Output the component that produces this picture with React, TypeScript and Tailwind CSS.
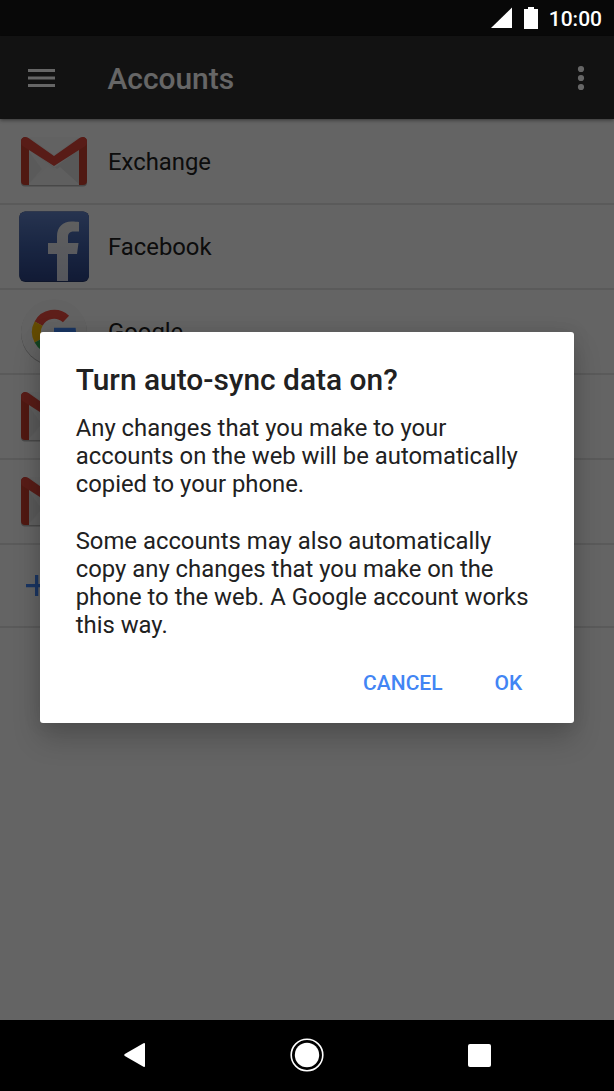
import type { ReactNode } from 'react';

function GmailIcon() {
  return (
    <svg className="h-[51px] w-[68px]" viewBox="0 0 68 51">
      <rect x="1" y="3" width="66" height="47.500" rx="4" fill="#000" opacity="0.28" />
      <path d="M8 2h52v47H8z" fill="#ececec" />
      <path d="M8 14l14 19L8 49z" fill="#e2e2e2" />
      <path d="M8 13l26 19 26-19v36z" fill="#dcdcdc" />
      <path d="M8 49l20-18 6 4 6-4 20 18z" fill="#eeeeee" />
      <path d="M9 1h50L34 19z" fill="#f4f4f4" />
      <path d="M1 5.500A4.500 4.500 0 0 1 5 1L9 4V49H5A4 4 0 0 1 1 45z" fill="#c9402f" />
      <path d="M67 5.500A4.500 4.500 0 0 0 63 1L59 4V49h4a4 4 0 0 0 4-4z" fill="#c9402f" />
      <path d="M1 5.500C1 1.500 5.500 0 8.500 2L34 20 59.500 2C62.500 0 67 1.500 67 5.500 67 8 66 9.500 64.500 10.500L34 30 3.500 10.500C2 9.500 1 8 1 5.500z" fill="#dc463b" />
    </svg>
  );
}

function FacebookIcon() {
  return (
    <svg className="h-[71px] w-[70px]" viewBox="0 0 70 71">
      <defs>
        <linearGradient id="fb" x1="0" y1="0" x2="0" y2="1">
          <stop offset="0" stopColor="#6181c6" />
          <stop offset="0.5" stopColor="#405fa6" />
          <stop offset="1" stopColor="#2c4385" />
        </linearGradient>
        <linearGradient id="fbLetter" x1="0" y1="0" x2="0" y2="1">
          <stop offset="0" stopColor="#eeeeee" />
          <stop offset="1" stopColor="#d3d7e6" />
        </linearGradient>
      </defs>
      <rect x="0.300" y="0.500" width="69.700" height="70.500" rx="6" fill="#24386c" />
      <rect x="0.300" y="0.500" width="69.700" height="69.500" rx="6" fill="url(#fb)" />
      <path
        d="M38 70V43H29V32h9v-6.500C38 16 44 10.600 52.500 10.600c3 0 6 .2 7.500.5v9.500h-5c-5 0-6 2.500-6 5.500V32h10.500L58 43h-9v27z"
        fill="url(#fbLetter)"
      />
    </svg>
  );
}

function GoogleIcon() {
  return (
    <svg className="h-[68px] w-[68px]" viewBox="0 0 68 68">
      <circle cx="34" cy="35" r="33" fill="#000" opacity="0.3" />
      <circle cx="34" cy="34" r="33" fill="#f6f6f6" />
      <g fill="none" strokeWidth="9">
        <path d="M46 21A17.500 17.500 0 0 0 18.600 25.600" stroke="#ea4b3f" />
        <path d="M18.600 25.600A17.500 17.500 0 0 0 18.600 42.400" stroke="#fabc05" />
        <path d="M18.600 42.400A17.500 17.500 0 0 0 44.500 48" stroke="#34a853" />
        <path d="M44.500 48A17.500 17.500 0 0 0 51.500 34" stroke="#4285f4" />
      </g>
      <path d="M34 29.800h21.600a22 22 0 0 1 0 9H34z" fill="#4285f4" />
    </svg>
  );
}

interface RowProps {
  icon: ReactNode;
  label?: string;
}

function AccountRow({ icon, label }: RowProps) {
  return (
    <li className="flex h-[85px] items-center border-b-2 border-[#e0e0e0]">
      <span className="ml-[19px] flex w-[70px] shrink-0 justify-center">{icon}</span>
      {label && <span className="ml-[19px] pt-[2px] text-[23.850px] text-[#212121]">{label}</span>}
    </li>
  );
}

const ACCOUNTS: RowProps[] = [
  { icon: <GmailIcon />, label: 'Exchange' },
  { icon: <FacebookIcon />, label: 'Facebook' },
  { icon: <GoogleIcon />, label: 'Google' },
  { icon: <GmailIcon /> },
  { icon: <GmailIcon /> },
];

export default function App() {
  return (
    <div className="relative flex h-[1091px] w-[614px] flex-col overflow-hidden bg-[#fafafa] font-[Roboto,sans-serif]">
      {/* Status bar, its icons stay above the scrim */}
      <div className="flex h-9 shrink-0 items-center justify-end bg-[#161616] pr-[12px] text-white">
        <div className="relative z-20 flex items-center">
          <svg className="h-[22px] w-[48px]" viewBox="0 0 48 22" fill="currentColor">
            <path d="M22 .5V21H1z" />
            <path d="M38 0h6v2h4v20H34V2h4z" />
          </svg>
          <span className="ml-[11px] pt-px text-[21px] leading-[36px] font-medium">10:00</span>
        </div>
      </div>

      <header className="flex h-[83px] shrink-0 items-center bg-[#2d2d2d] pl-7 shadow-[0_1px_4px_rgba(0,0,0,0.5)]">
        <svg className="h-5 w-[27px]" viewBox="0 0 27 20" fill="#fff">
          <path d="M0 1h27v3H0zM0 8.500h27v3H0zM0 16h27v3H0z" />
        </svg>
        <h1 className="mt-[3px] ml-[52.500px] text-[29.900px] leading-9 font-medium text-white">Accounts</h1>
        <svg className="mr-[29px] ml-auto h-[26px] w-2" viewBox="0 0 8 26" fill="#fff">
          <circle cx="4" cy="4" r="3.100" />
          <circle cx="4" cy="13" r="3.100" />
          <circle cx="4" cy="22" r="3.100" />
        </svg>
      </header>

      <ul className="pt-px">
        {ACCOUNTS.map((account, i) => (
          <AccountRow key={i} {...account} />
        ))}
        <li className="flex h-[83px] items-center border-b-2 border-[#e0e0e0]">
          <svg className="ml-[26px] h-[21px] w-[21px]" viewBox="0 0 21 21" fill="#4285f4">
            <path d="M9 0h3.300v8.900H21v3.300h-8.700V21H9v-8.800H0V8.900h9z" />
          </svg>
        </li>
      </ul>

      {/* Navigation bar */}
      <nav className="relative z-20 mt-auto flex h-[71.500px] shrink-0 items-center justify-between bg-black pr-[122.600px] pl-[124px]">
        <svg className="h-[26px] w-[21px]" viewBox="0 0 21 26" fill="#fff">
          <path d="M19.500 1.200Q21 .4 21 2v22q0 1.600-1.500.8L.8 14Q-.3 13 .8 12z" />
        </svg>
        <svg className="h-[34px] w-[34px]" viewBox="0 0 34 34">
          <circle cx="17" cy="17" r="15.800" fill="none" stroke="#fff" strokeWidth="1.600" />
          <circle cx="17" cy="17" r="12.200" fill="#fff" />
        </svg>
        <span className="h-[23px] w-[23px] rounded-[2px] bg-white" />
      </nav>

      {/* Scrim with the dialog on top */}
      <div className="absolute inset-0 z-10 bg-black/60">
        <section
          role="dialog"
          className="mx-auto mt-[332px] h-[391px] w-[534.600px] rounded-[3px] bg-white px-9 pt-[30px] text-[#212121] shadow-[0_16px_28px_rgba(0,0,0,0.19),0_0_18px_rgba(0,0,0,0.1)]"
        >
          <h2 className="text-[29.900px] leading-9 font-medium whitespace-nowrap">Turn auto-sync data on?</h2>
          <p className="mt-4 text-[23.850px] leading-[28.130px] whitespace-nowrap">
            Any changes that you make to your
            <br />
            accounts on the web will be automatically
            <br />
            copied to your phone.
            <br />
            <br />
            Some accounts may also automatically
            <br />
            copy any changes that you make on the
            <br />
            phone to the web. A Google account works
            <br />
            this way.
          </p>
          <div className="mt-[30px] flex justify-end gap-[52px] pr-4 text-[21px] leading-7 font-medium text-[#4285f4]">
            <button>CANCEL</button>
            <button>OK</button>
          </div>
        </section>
      </div>
    </div>
  );
}
